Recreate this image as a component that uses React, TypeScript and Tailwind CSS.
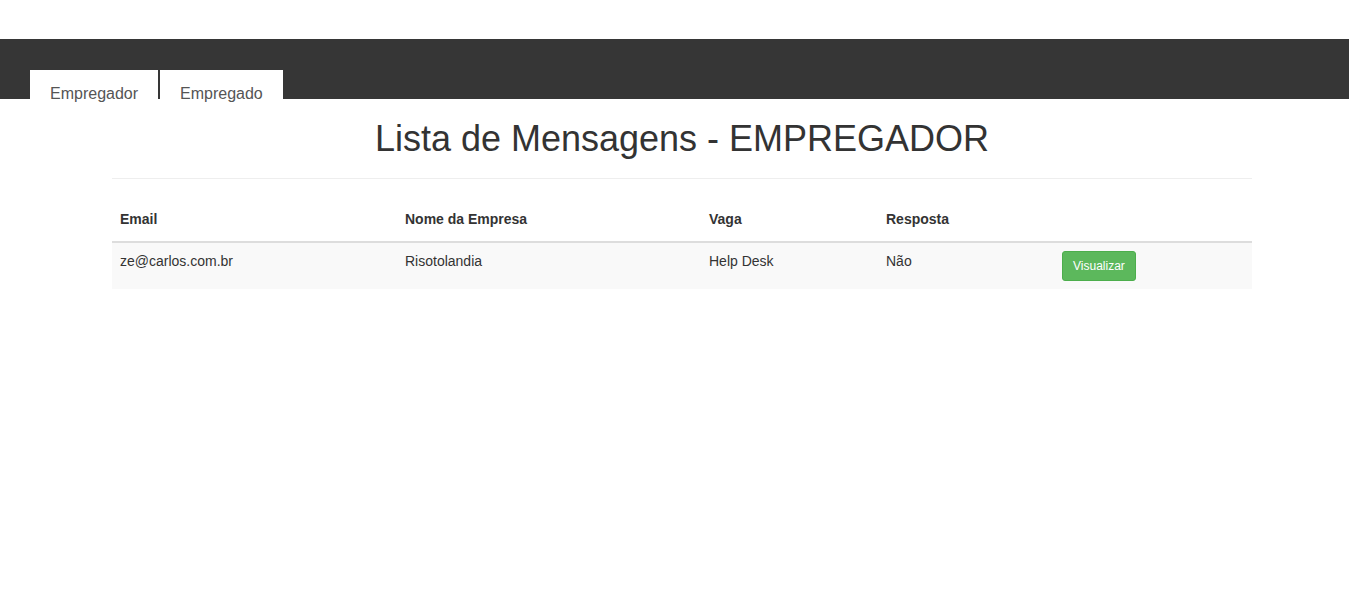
import React from "react";

export default function App() {
  const font = { fontFamily: '"Liberation Sans", Arial, sans-serif' };
  return (
    <div className="min-h-[612px] bg-white text-[#333] text-[14px] leading-[20px]" style={font}>
      <div className="h-[39px]" />
      <div className="h-[60px] bg-[#363636] flex items-end pl-[30px] gap-[2px]">
        <div className="h-[29px] bg-white px-[20px] pt-[14px] text-[16px] leading-[20px] text-[#555] whitespace-nowrap overflow-visible">
          Empregador
        </div>
        <div className="h-[29px] bg-white px-[20px] pt-[14px] text-[16px] leading-[20px] text-[#555] whitespace-nowrap overflow-visible">
          Empregado
        </div>
      </div>
      <div className="ml-[112px] w-[1140px]">
        <h1 className="mt-[20px] mb-[19px] text-center text-[36px] leading-[39.6px] font-normal text-[#333]">
          Lista de Mensagens - EMPREGADOR
        </h1>
        <div className="border-t border-[#eee]" />
        <table className="mt-[20px] w-[1140px] border-collapse table-fixed">
          <colgroup>
            <col className="w-[285px]" />
            <col className="w-[304px]" />
            <col className="w-[177px]" />
            <col className="w-[176px]" />
            <col className="w-[198px]" />
          </colgroup>
          <thead>
            <tr className="border-b-2 border-[#ddd]">
              <th className="text-left font-bold px-[8px] pt-[10px] pb-[12px] align-bottom">Email</th>
              <th className="text-left font-bold px-[8px] pt-[10px] pb-[12px] align-bottom">Nome da Empresa</th>
              <th className="text-left font-bold px-[8px] pt-[10px] pb-[12px] align-bottom">Vaga</th>
              <th className="text-left font-bold px-[8px] pt-[10px] pb-[12px] align-bottom">Resposta</th>
              <th className="px-[8px] pt-[10px] pb-[12px]"></th>
            </tr>
          </thead>
          <tbody>
            <tr className="bg-[#f9f9f9]">
              <td className="p-[8px] align-top">ze@carlos.com.br</td>
              <td className="p-[8px] align-top">Risotolandia</td>
              <td className="p-[8px] align-top">Help Desk</td>
              <td className="p-[8px] align-top">Não</td>
              <td className="p-[8px] align-top">
                <button className="h-[30px] px-[10px] text-[12px] leading-[18px] text-white bg-[#5cb85c] border border-[#4cae4c] rounded-[3px]" style={font}>
                  Visualizar
                </button>
              </td>
            </tr>
          </tbody>
        </table>
      </div>
    </div>
  );
}
